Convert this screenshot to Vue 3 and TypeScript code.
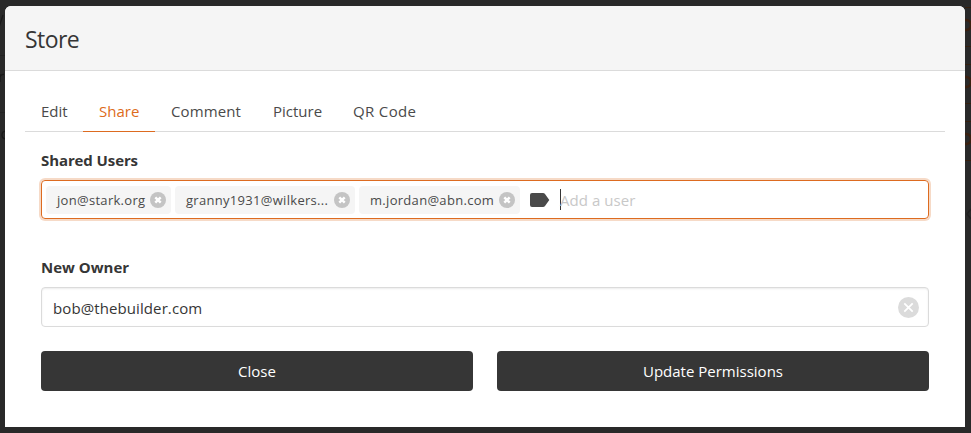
<script setup lang="ts">
import { ref } from 'vue'

interface Tab {
  id: string
  label: string
}

const tabs: Tab[] = [
  { id: 'edit', label: 'Edit' },
  { id: 'share', label: 'Share' },
  { id: 'comment', label: 'Comment' },
  { id: 'picture', label: 'Picture' },
  { id: 'qr', label: 'QR Code' },
]
const activeTab = ref('share')

const sharedUsers = ref<{ id: string; name: string }[]>([
  { id: 'jon', name: 'jon@stark.org' },
  { id: 'granny', name: 'granny1931@wilkers...' },
  { id: 'jordan', name: 'm.jordan@abn.com' },
])
const owner = ref('bob@thebuilder.com')

function removeUser(id: string) {
  sharedUsers.value = sharedUsers.value.filter((u) => u.id !== id)
}
</script>

<template>
  <div class="page">
    <svg class="behind left" viewBox="0 0 5 240" aria-hidden="true">
      <path d="M0 55.5H5M0 112.5H5" stroke="#222" />
      <path d="M-3 14 0 24 3 15M0 74V82M0 77Q1 74 4 74.500M6 131Q2 131 2 135T6 139" fill="none" stroke="#191919" stroke-width="1.3" />
    </svg>
    <svg class="behind right" viewBox="0 0 6 240" aria-hidden="true">
      <path d="M0 7.500H6M0 46.500H6M0 64.500H6M0 103.500H6M0 121.500H6M0 160.500H6" stroke="#35200f" />
      <g fill="none" stroke="#3a2010" stroke-width="2.500">
        <circle cx="1" cy="25" r="5" />
        <circle cx="1" cy="82" r="5" />
        <circle cx="1" cy="139" r="5" />
      </g>
      <path d="M6 209 2 214 6 219" fill="none" stroke="#202020" stroke-width="1.500" />
    </svg>
    <section class="modal" role="dialog">
      <header class="head"><h1>Store</h1></header>
      <nav class="tabs">
        <a
          v-for="tab in tabs"
          :key="tab.id"
          :class="['tab', tab.id, { active: tab.id === activeTab }]"
          @click="activeTab = tab.id"
        >{{ tab.label }}</a>
      </nav>
      <div class="body">
        <label class="label shared">Shared Users</label>
        <div class="tag-field">
          <span v-for="user in sharedUsers" :key="user.id" :class="['tag', user.id]">
            <span class="name">{{ user.name }}</span>
            <svg class="remove" viewBox="0 0 16 16" @click="removeUser(user.id)">
              <circle cx="8" cy="8" r="8" fill="#c4c4c4" />
              <path d="M5.3 5.3 10.7 10.7M10.7 5.3 5.3 10.7" stroke="#fff" stroke-width="2.4" />
            </svg>
          </span>
          <svg class="tag-icon" viewBox="0 0 20 14">
            <path d="M2 0H13Q14.3 0 15 1L19.3 7 15 13Q14.3 14 13 14H2Q0 14 0 12V2Q0 0 2 0Z" fill="#4a4a4a" />
          </svg>
          <span class="caret"></span>
          <span class="placeholder">Add a user</span>
        </div>
        <label class="label owner">New Owner</label>
        <div class="input">
          <span class="value">{{ owner }}</span>
          <svg class="clear" viewBox="0 0 20 20" @click="owner = ''">
            <circle cx="10" cy="10" r="10" fill="#dbdbdb" />
            <path d="M6 6 14 14M14 6 6 14" stroke="#fff" stroke-width="1.7" />
          </svg>
        </div>
        <div class="actions">
          <button class="close">Close</button>
          <button class="update">Update Permissions</button>
        </div>
      </div>
    </section>
  </div>
</template>

<style>
body {
  overflow: hidden;
  background: #292929;
}
</style>

<style scoped>
* {
  box-sizing: border-box;
}
.page {
  position: relative;
  width: 971px;
  height: 433px;
  padding: 6px 6px 6px 5px;
  overflow: hidden;
  background: #292929;
  color: #363636;
  font: 16px/24px 'Open Sans', 'Noto Sans', sans-serif;
}
.behind {
  position: absolute;
  top: 0;
  height: 240px;
}
.left {
  left: 0;
  width: 5px;
}
.right {
  right: 0;
  width: 6px;
}
.modal {
  position: relative;
  height: 421px;
  border-radius: 6px 6px 0 0;
  background: #fff;
  overflow: hidden;
}
.head {
  height: 65px;
  padding: 20px;
  border-bottom: 1px solid #dbdbdb;
  background: #f5f5f5;
}
h1 {
  margin: 0;
  font-size: 23px;
  font-weight: 400;
  line-height: 26px;
  letter-spacing: -0.55px;
}
.tabs {
  display: flex;
  height: 41px;
  margin: 20px 20px 0;
  border-bottom: 1px solid #dbdbdb;
}
.tab {
  height: 41px;
  padding: 8px 0 0 16px;
  border-bottom: 1px solid #dbdbdb;
  color: #4a4a4a;
  font-size: 15px;
  white-space: nowrap;
}
.tab.active {
  border-color: #dd6b20;
  color: #dd6b20;
}
.tab.edit { width: 58px; }
.tab.share { width: 72px; }
.tab.comment { width: 102px; letter-spacing: 0.1px; }
.tab.picture { width: 80px; }
.tab.qr { width: 95px; letter-spacing: 0.35px; }
.body {
  padding: 16px 36px 0;
}
.label {
  display: block;
  height: 32px;
  font-size: 15px;
  font-weight: 700;
  letter-spacing: -0.1px;
}
.label.owner {
  letter-spacing: 0;
}
.tag-field {
  display: flex;
  align-items: center;
  height: 39px;
  margin-bottom: 36px;
  padding-left: 4px;
  border: 1px solid #dd6b20;
  border-radius: 4px;
  box-shadow: 0 0 0 2px rgba(221, 107, 32, 0.25);
}
.tag {
  display: flex;
  align-items: center;
  justify-content: space-between;
  height: 28px;
  margin-right: 4px;
  padding: 0 5px 0 11px;
  border-radius: 4px;
  background: #f5f5f5;
  color: #4a4a4a;
  font-size: 13px;
  letter-spacing: 0.3px;
  white-space: nowrap;
}
.tag.jon { width: 125px; }
.tag.granny { width: 180px; }
.tag.jordan { width: 161px; }
.remove {
  flex: none;
  width: 16px;
  height: 16px;
}
.tag-icon {
  width: 20px;
  height: 14px;
  margin-left: 6px;
}
.caret {
  width: 1px;
  height: 21px;
  margin-left: 10px;
  background: #363636;
}
.placeholder {
  margin-left: -1px;
  color: #c8c8c8;
  font-size: 15px;
  letter-spacing: 0.05px;
}
.input {
  display: flex;
  align-items: center;
  justify-content: space-between;
  height: 40px;
  padding: 0 9px 0 11px;
  border: 1px solid #dbdbdb;
  border-radius: 4px;
  box-shadow: inset 0 1px 2px rgba(10, 10, 10, 0.08);
}
.value {
  padding-top: 1px;
  font-size: 15px;
  letter-spacing: 0.1px;
}
.clear {
  width: 21px;
  height: 21px;
}
.actions {
  display: grid;
  grid-template-columns: 1fr 1fr;
  gap: 24px;
  margin-top: 24px;
}
button {
  height: 40px;
  padding: 0;
  border: 0;
  border-radius: 4px;
  background: #363636;
  color: #fff;
  font: 15px/24px 'Open Sans', 'Noto Sans', sans-serif;
}
</style>
